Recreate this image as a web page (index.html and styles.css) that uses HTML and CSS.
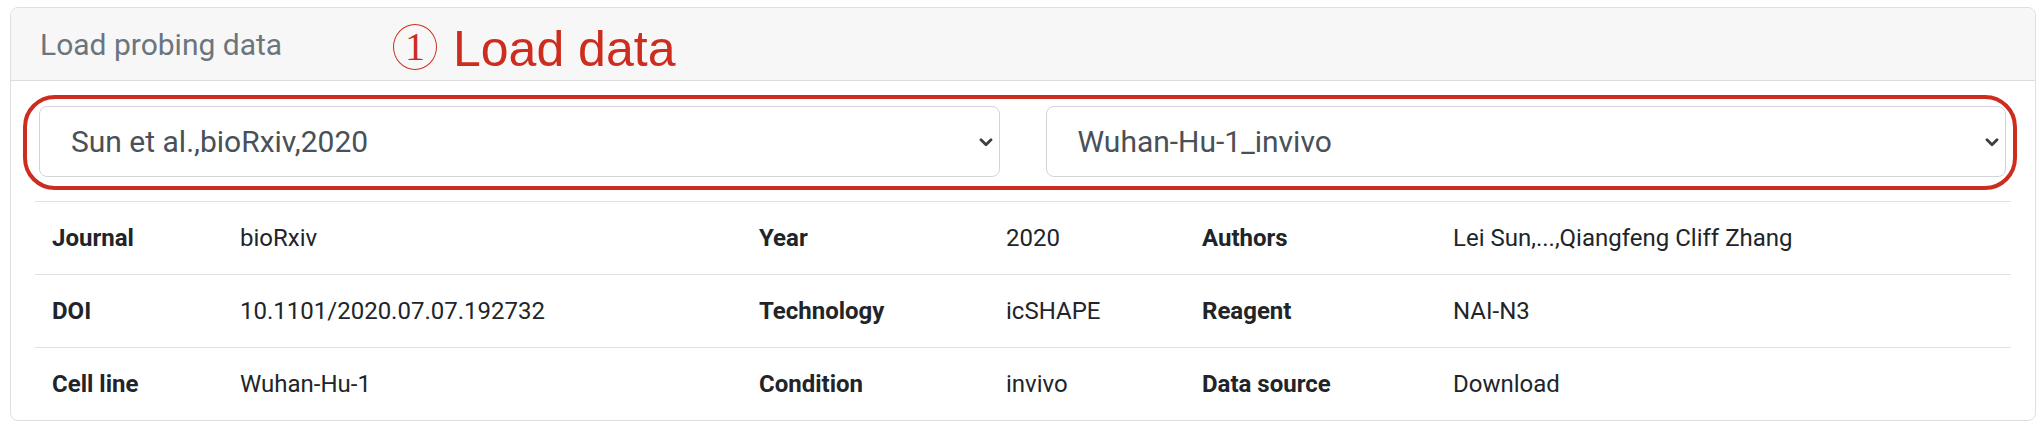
FILE: index.html
```html
<!DOCTYPE html>
<html lang="en">
<head>
<meta charset="utf-8">
<title>Load probing data</title>
<link rel="stylesheet" href="styles.css">
</head>
<body>
<div class="card">
  <div class="card-header">Load probing data</div>
  <div class="card-body">
    <div class="selects">
      <div class="select">
        <span class="select-text">Sun et al.,bioRxiv,2020</span>
        <svg class="chev" width="14" height="9" viewBox="0 0 14 9"><path d="M2 1.8 L7 6.8 L12 1.8" fill="none" stroke="#3a3f44" stroke-width="2.8" stroke-linecap="round" stroke-linejoin="round"/></svg>
      </div>
      <div class="select">
        <span class="select-text">Wuhan-Hu-1_invivo</span>
        <svg class="chev" width="14" height="9" viewBox="0 0 14 9"><path d="M2 1.8 L7 6.8 L12 1.8" fill="none" stroke="#3a3f44" stroke-width="2.8" stroke-linecap="round" stroke-linejoin="round"/></svg>
      </div>
    </div>
    <table class="info">
      <colgroup>
        <col class="c1"><col class="c2"><col class="c3"><col class="c4"><col class="c5"><col class="c6">
      </colgroup>
      <tbody>
        <tr><th>Journal</th><td>bioRxiv</td><th>Year</th><td>2020</td><th>Authors</th><td>Lei Sun,...,Qiangfeng Cliff Zhang</td></tr>
        <tr><th>DOI</th><td>10.1101/2020.07.07.192732</td><th>Technology</th><td>icSHAPE</td><th>Reagent</th><td>NAI-N3</td></tr>
        <tr><th>Cell line</th><td>Wuhan-Hu-1</td><th>Condition</th><td>invivo</td><th>Data source</th><td>Download</td></tr>
      </tbody>
    </table>
  </div>
  <div class="note"><span class="note-num">1</span><span class="note-text">Load data</span></div>
  <div class="note-box"></div>
</div>
</body>
</html>
```

FILE: styles.css
```css
* { box-sizing: border-box; }
html, body { background: #ffffff; }
body {
  margin: 7px 8px 0 10px;
  font-family: Roboto, "Liberation Sans", Arial, sans-serif;
  color: #212529;
}
.card {
  position: relative;
  border: 1px solid #dfdfdf;
  border-radius: 8px;
  background: #fff;
  overflow: hidden;
}
.card-header {
  height: 73px;
  padding: 14px 29px 0;
  font-size: 30px;
  line-height: 45px;
  color: #6c757d;
  background: #f7f7f7;
  border-bottom: 1px solid #dcdcdc;
}
.card-body {
  padding: 25px 24px 0;
}
.selects {
  display: grid;
  grid-template-columns: 1fr 1fr;
  column-gap: 46px;
  padding: 0 5px 0 4px;
  margin-bottom: 24px;
}
.select {
  height: 71px;
  border: 1px solid #ced4da;
  border-radius: 8px;
  display: flex;
  align-items: center;
  justify-content: space-between;
  padding: 0 6px 0 31px;
  font-size: 30px;
  color: #495057;
  background: #fff;
}
.select-text { white-space: nowrap; }
.chev { display: block; margin-top: 1px; }
.info {
  width: 100%;
  border-collapse: collapse;
  table-layout: fixed;
  font-size: 24px;
  line-height: 36px;
}
.c1 { width: 188px; }
.c2 { width: 519px; }
.c3 { width: 247px; }
.c4 { width: 196px; }
.c5 { width: 251px; }
.c6 { width: auto; }
.info th, .info td {
  text-align: left;
  padding: 18px 0 18px 17px;
  border-top: 1px solid #dee2e6;
  white-space: nowrap;
  vertical-align: middle;
}
.info th { font-weight: 700; color: #212529; }
.info td { font-weight: 400; color: #212529; }

/* annotation overlay */
.note {
  position: absolute;
  left: 382px;
  top: 16px;
  display: flex;
  align-items: flex-start;
  color: #cd2d1f;
}
.note-num {
  width: 44px;
  height: 46px;
  margin-top: 0px;
  border: 1.5px solid #cd2d1f;
  border-radius: 50%;
  display: flex;
  align-items: center;
  justify-content: center;
  font-family: "Liberation Serif", "Times New Roman", serif;
  font-size: 40px;
  line-height: 1;
}
.note-text {
  margin-left: 16px;
  font-family: "Liberation Sans", Arial, sans-serif;
  font-size: 50px;
  line-height: 50px;
}
.note-box {
  position: absolute;
  left: 12px;
  top: 87px;
  width: 1994px;
  height: 95px;
  border: 4px solid #cd2d1f;
  border-radius: 32px;
  pointer-events: none;
}
```
